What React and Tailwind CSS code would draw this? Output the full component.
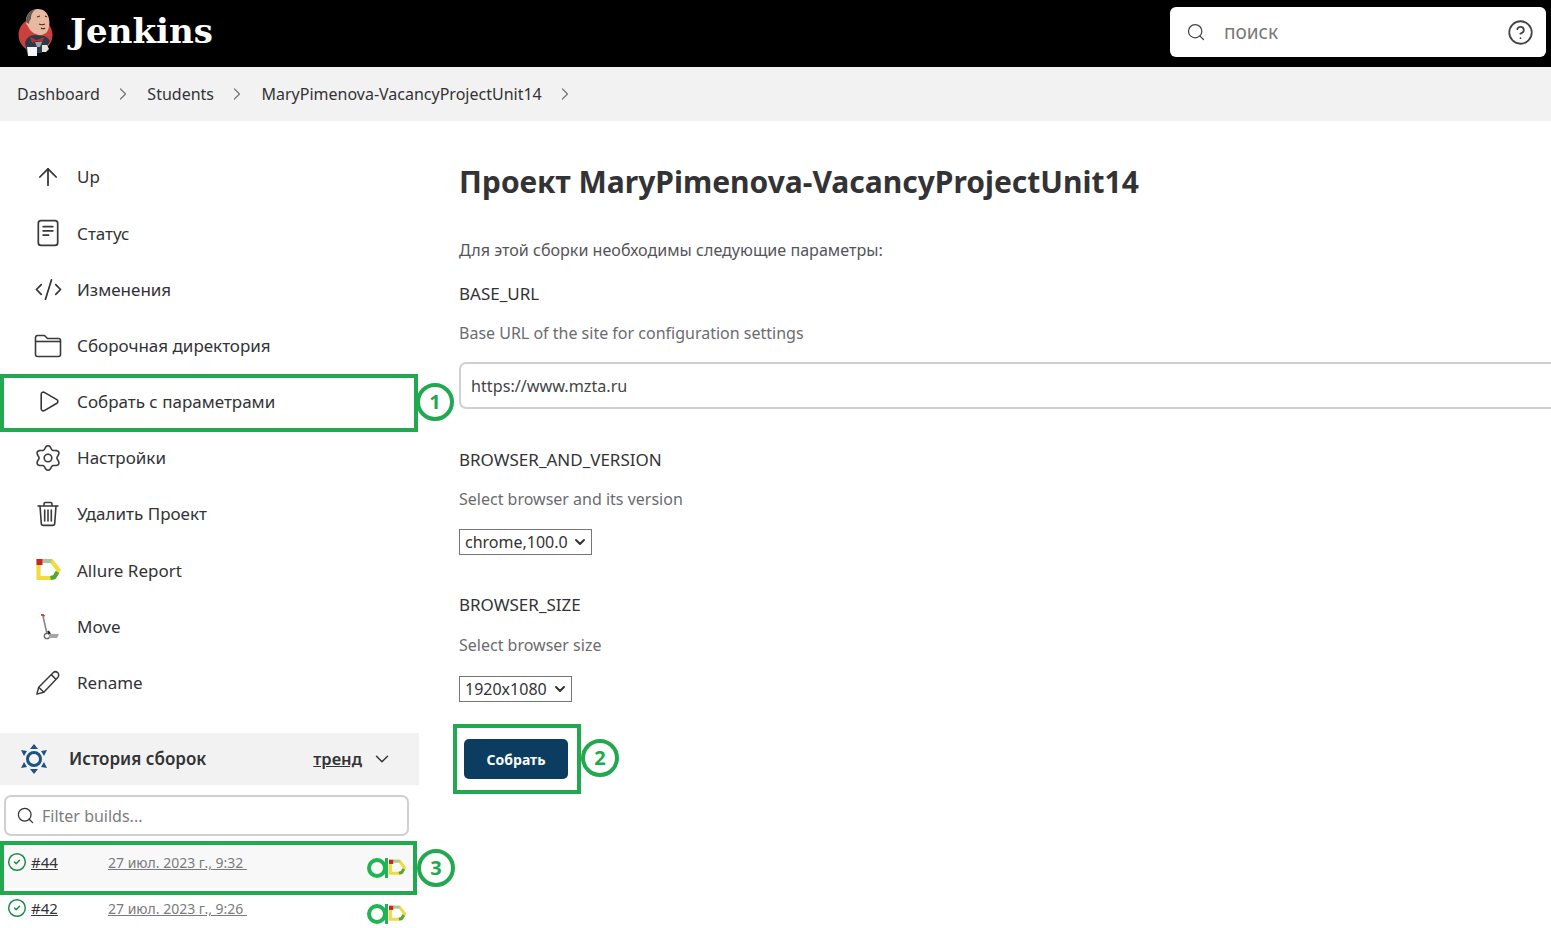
import { ArrowUp, ChevronDown, ChevronRight, CircleCheck, CircleHelp, CodeXml, Play, Search } from 'lucide-react';

const JenkinsLogo = () => (
  <svg width="40" height="50" viewBox="0 0 40 50">
    <circle cx="18.5" cy="28" r="17" fill="#c9403c" />
    <path d="M8 36c1-5 5-8 10-8l9 1c3 1 5 3 6 5l-3 5-4 1-1 6H10z" fill="#2b3a4a" />
    <path d="M9 14c0-7 5-12 12-12 6 0 10 4 11 10 1 5 0 11-3 14-3 2-7 3-10 1-4-1-7-5-8-8-2-1-2-4-2-5z" fill="#e8b9a0" />
    <path d="M9 15c0-7 4-12 10-13-4 3-5 6-5 10-1 1-2 2-2 5z" fill="#6b5a50" />
    <path d="M22 17c2 1 4 1 6 0M24 21c1 1 3 1 4 0M20 10l3-1M28 9l2 1" stroke="#4a2a20" strokeWidth="1.2" fill="none" />
    <path d="M13 30l7 3 7-3-2 6-5-2-5 2z" fill="#b3312e" />
    <path d="M18 35h7l-2 5h-3z" fill="#9aa3ab" />
    <path d="M10 40h10v9H11z" fill="#f4f4f4" />
    <path d="M25 38h5l2 4-3 3h-4z" fill="#e9e4da" />
  </svg>
);

const AllureMark = ({ className }) => (
  <svg className={className} viewBox="0 0 26 24" fill="none">
    <path d="M3 3h13l7 9-5 8H3z" stroke="#f0dc3c" strokeWidth="4.2" strokeLinejoin="miter" />
    <path d="M7 3h9" stroke="#a9c8a2" strokeWidth="4.2" />
    <rect x="1" y="1" width="6" height="6" fill="#c9252b" />
    <path d="M15 20l4-1 3-5" stroke="#4da83d" strokeWidth="4" />
  </svg>
);

const MoveIcon = () => (
  <svg width="26" height="28" viewBox="0 0 26 28" fill="none">
    <path d="M7 2l3 1M8 3l4 18" stroke="#888" strokeWidth="1.6" />
    <path d="M6 2l3 0" stroke="#b33" strokeWidth="1.6" />
    <circle cx="12" cy="23" r="2.7" stroke="#666" strokeWidth="1.3" />
    <path d="M13 18l2 3" stroke="#222" strokeWidth="2.2" />
    <path d="M14 21h10l-2 4h-8z" fill="#a5a5a5" />
  </svg>
);

const StatusIcon = () => (
  <svg width="26" height="28" viewBox="0 0 24 26" fill="none" stroke="#3a3a3c" strokeWidth="1.6" strokeLinecap="round">
    <rect x="3" y="1.5" width="18" height="23" rx="2.5" />
    <path d="M7.5 7h9M7.5 11h9M7.5 15h5" />
  </svg>
);

const FolderIcon = () => (
  <svg width="28" height="24" viewBox="0 0 28 24" fill="none" stroke="#3a3a3c" strokeWidth="1.6" strokeLinejoin="round">
    <path d="M1.5 3.5a2 2 0 0 1 2-2h7l3 3h11a2 2 0 0 1 2 2v14a2 2 0 0 1-2 2h-21a2 2 0 0 1-2-2z" />
    <path d="M1.5 7.5h25" />
  </svg>
);

// six rounded lobes, sampled round the circle
const gearPath = (() => {
  const pts = [];
  for (let i = 0; i < 72; i++) {
    const t = (i / 72) * Math.PI * 2;
    const r = 10.6 + 1.7 * Math.cos(6 * t);
    pts.push(`${(14 + r * Math.sin(t)).toFixed(2)} ${(14 - r * Math.cos(t)).toFixed(2)}`);
  }
  return `M${pts.join('L')}Z`;
})();

const GearIcon = () => (
  <svg width="28" height="28" viewBox="0 0 28 28" fill="none" stroke="#3a3a3c" strokeWidth="1.6" strokeLinejoin="round">
    <path d={gearPath} />
    <circle cx="14" cy="14" r="3.8" />
  </svg>
);

const TrashIcon = () => (
  <svg width="24" height="26" viewBox="0 0 24 26" fill="none" stroke="#3a3a3c" strokeWidth="1.6" strokeLinecap="round" strokeLinejoin="round">
    <path d="M2 5h20M8 5V3a1.5 1.5 0 0 1 1.5-1.5h5A1.5 1.5 0 0 1 16 3v2" />
    <path d="M4 5l1.3 17.5a2 2 0 0 0 2 1.9h9.4a2 2 0 0 0 2-1.9L20 5" />
    <path d="M8.7 9v11M12 9v11M15.3 9v11" />
  </svg>
);

const PencilIcon = () => (
  <svg width="26" height="26" viewBox="0 0 28 28" fill="none" stroke="#3a3a3c" strokeWidth="1.6" strokeLinejoin="round">
    <path d="M2 26l2-7.5L19.5 3a3 3 0 0 1 5 5L9.5 24z" />
    <path d="M4 18.5l5.5 5.5M17.5 5l5 5" />
  </svg>
);

const HistoryIcon = () => (
  <svg width="30" height="32" viewBox="0 0 30 32" fill="#1d5288">
    <path d="M15 1l4 5h-8zM15 31l-4-5h8zM2 7l6 1-3 5zM28 7l-6 1 3 5zM2 25l3-6 3 5zM28 25l-3-6-3 5z" />
    <circle cx="15" cy="16" r="6.5" fill="none" stroke="#1d5288" strokeWidth="3" />
  </svg>
);

const BuildBadge = () => (
  <div className="flex items-center">
    <div className="h-[20px] w-[20px] rounded-full border-[4px] border-[#20b455]" />
    <div className="-ml-[2px] h-[20px] w-[3px] bg-[#20b455]" />
    <AllureMark className="h-[17px] w-[19px]" />
  </div>
);

const menu = [
  { label: 'Up', icon: <ArrowUp size={28} strokeWidth={1.5} /> },
  { label: 'Статус', icon: <StatusIcon /> },
  { label: 'Изменения', icon: <CodeXml size={29} strokeWidth={1.4} /> },
  { label: 'Сборочная директория', icon: <FolderIcon /> },
  { label: 'Собрать с параметрами', icon: <Play size={25} strokeWidth={1.5} /> },
  { label: 'Настройки', icon: <GearIcon /> },
  { label: 'Удалить Проект', icon: <TrashIcon /> },
  { label: 'Allure Report', icon: <AllureMark className="h-[24px] w-[27px]" /> },
  { label: 'Move', icon: <MoveIcon /> },
  { label: 'Rename', icon: <PencilIcon /> },
];

const builds = [
  { id: '#44', date: '27 июл. 2023 г., 9:32 ', row: 'h-[46px] bg-[#f8f8f8]' },
  { id: '#42', date: '27 июл. 2023 г., 9:26 ', row: 'h-[46px]' },
];

const crumbs = ['Dashboard', 'Students', 'MaryPimenova-VacancyProjectUnit14'];

const Marker = ({ n, className }) => (
  <div className={`absolute flex h-[38px] w-[38px] items-center justify-center rounded-full border-[4px] border-[#22a94f] bg-white text-[20px] font-bold text-[#22a94f] ${className}`}>
    {n}
  </div>
);

const App = () => {
  return (
    <div className="relative h-[928px] w-[1551px] overflow-hidden bg-white font-['Noto_Sans','Open_Sans',sans-serif] text-[17px] text-[#333336]">
      <header className="flex h-[67px] items-start justify-between bg-black pl-[17px] pr-[5px] pt-[7px]">
        <div className="flex items-center gap-[13px]">
          <JenkinsLogo />
          <span className="-mt-[3px] font-['DejaVu_Serif',serif] text-[34px] font-bold leading-[46px] text-white">Jenkins</span>
        </div>
        <div className="flex h-[50px] w-[376px] items-center rounded-[6px] bg-white pl-[16px] pr-[12px]">
          <Search size={20} strokeWidth={1.5} className="text-[#444]" />
          <span className="ml-[18px] flex-1 text-[19px] text-[#777]">поиск</span>
          <CircleHelp size={27} strokeWidth={1.6} className="text-[#444]" />
        </div>
      </header>

      <nav className="flex h-[54px] items-center bg-[#f2f2f2] pl-[17px] text-[16px]">
        {crumbs.map((c) => (
          <div key={c} className="flex items-center">
            <span>{c}</span>
            <ChevronRight size={20} strokeWidth={1.5} className="ml-[13.5px] mr-[14px] text-[#777]" />
          </div>
        ))}
      </nav>

      <div className="flex">
        <aside className="w-[419px] shrink-0 pt-[28px]">
          <ul>
            {menu.map((m) => (
              <li key={m.label} className="flex h-[56.2px] items-center pl-[33px]">
                <span className="flex w-[30px] shrink-0 justify-center">{m.icon}</span>
                <span className="ml-[14px]">{m.label}</span>
              </li>
            ))}
          </ul>

          <div className="mt-[22px] flex h-[52px] items-center bg-[#f2f2f2] pl-[19px] pr-[26px]">
            <HistoryIcon />
            <span className="ml-[20px] flex-1 font-semibold">История сборок</span>
            <span className="text-[16.5px] font-semibold underline">тренд</span>
            <ChevronDown size={22} strokeWidth={1.6} className="ml-[9px]" />
          </div>

          <div className="ml-[4px] mt-[10px] flex h-[41px] w-[405px] items-center rounded-[7px] border-2 border-[#cfd0d4] pl-[10px] pt-[1px] text-[#7d7d80]">
            <Search size={19} strokeWidth={1.6} className="text-[#333]" />
            <span className="ml-[7px] text-[16px]">Filter builds...</span>
          </div>

          <div className="mt-[6px] w-[414px]">
            {builds.map((b) => (
              <div key={b.id} className={`relative flex items-start pl-[7px] pt-[11px] ${b.row}`}>
                <CircleCheck size={20} strokeWidth={1.8} className="-mt-[1px] shrink-0 text-[#1f8a4c]" />
                <span className="ml-[4px] w-[77px] text-[15px] leading-[18px] underline">{b.id}</span>
                <span className="mt-[1px] flex-1 whitespace-pre text-[14px] leading-[18px] text-[#7a7a7d] underline">{b.date}</span>
                <div className="mr-[7px] mt-[5px]">
                  <BuildBadge />
                </div>
              </div>
            ))}
          </div>
        </aside>

        <main className="min-w-0 flex-1 pl-[40px] pt-[39px]">
          <h1 className="whitespace-nowrap text-[30px] font-bold leading-[44px] text-[#333336]">Проект MaryPimenova-VacancyProjectUnit14</h1>
          <p className="mt-[34px] text-[16.1px] leading-[24px] text-[#55555a]">Для этой сборки необходимы следующие параметры:</p>

          <div className="mt-[20px] leading-[24px]">BASE_URL</div>
          <p className="mt-[15px] text-[16px] leading-[24px] text-[#6c6c70]">Base URL of the site for configuration settings</p>
          <div className="mt-[17px] flex h-[47px] w-[1200px] items-center rounded-[7px] border-2 border-[#cfd0d4] pl-[10px] pt-[1px] text-[16.2px] text-[#444]">https://www.mzta.ru</div>

          <div className="mt-[39px] leading-[24px]">BROWSER_AND_VERSION</div>
          <p className="mt-[15px] text-[16px] leading-[24px] text-[#6c6c70]">Select browser and its version</p>
          <div className="mt-[18px] flex h-[26px] w-[133px] items-center justify-between border border-[#767676] pl-[5px] pr-[3px] text-[16px]">
            <span>chrome,100.0</span>
            <ChevronDown size={16} strokeWidth={3} />
          </div>

          <div className="mt-[38px] leading-[24px]">BROWSER_SIZE</div>
          <p className="mt-[16px] text-[16px] leading-[24px] text-[#6c6c70]">Select browser size</p>
          <div className="mt-[19px] flex h-[26px] w-[113px] items-center justify-between border border-[#767676] pl-[5px] pr-[3px] text-[16px]">
            <span>1920x1080</span>
            <ChevronDown size={16} strokeWidth={3} />
          </div>

          <button className="ml-[5px] mt-[37px] flex h-[40px] w-[104px] items-center justify-center rounded-[5px] bg-[#0b3d60] text-[14px] font-bold text-white">Собрать</button>
        </main>
      </div>

      <div className="absolute left-0 top-[374px] h-[58px] w-[418px] border-[4px] border-[#22a94f]" />
      <Marker n="1" className="left-[416px] top-[383px]" />
      <div className="absolute left-[453px] top-[724px] h-[70px] w-[128px] border-[4px] border-[#22a94f]" />
      <Marker n="2" className="left-[581px] top-[739px]" />
      <div className="absolute left-0 top-[841px] h-[54px] w-[417px] border-[4px] border-[#22a94f]" />
      <Marker n="3" className="left-[417px] top-[849px]" />
    </div>
  );
};

export default App;
